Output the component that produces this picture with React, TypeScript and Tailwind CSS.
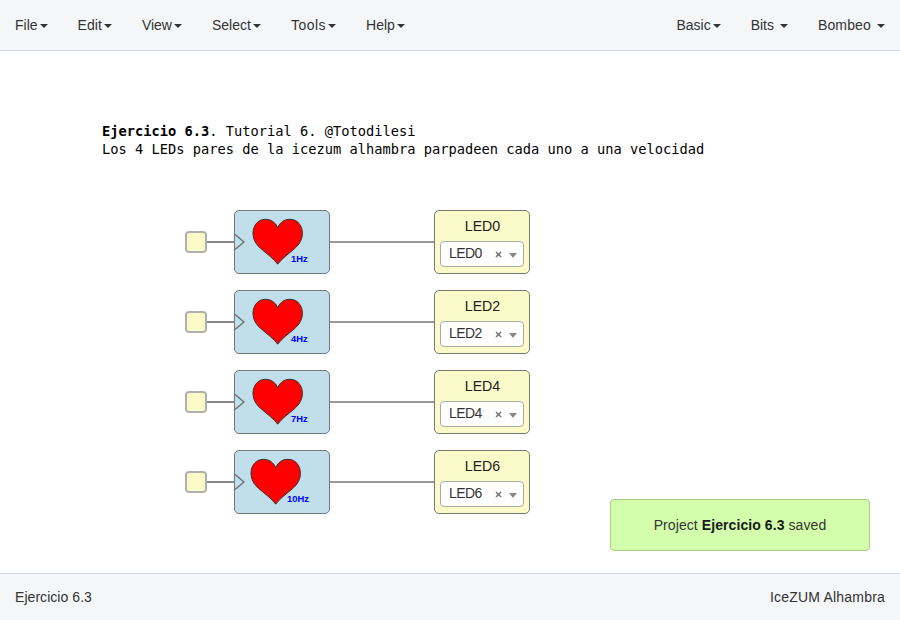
const leftMenu = [
  { label: "File", tracking: "" },
  { label: "Edit", tracking: "tracking-[0.05px]" },
  { label: "View", tracking: "" },
  { label: "Select", tracking: "" },
  { label: "Tools", tracking: "tracking-[0.5px]" },
  { label: "Help", tracking: "" },
];
const rightMenu = [
  { label: "Basic", tracking: "" },
  { label: "Bits\u00a0", tracking: "" },
  { label: "Bombeo\u00a0", tracking: "tracking-[0.15px]" },
];

const rows = [
  { hz: "1Hz", led: "LED0", hzX: 57, shift: 0 },
  { hz: "4Hz", led: "LED2", hzX: 57, shift: 0 },
  { hz: "7Hz", led: "LED4", hzX: 57, shift: 0 },
  { hz: "10Hz", led: "LED6", hzX: 53, shift: -2 },
];

function Menu({ label, tracking }: { label: string; tracking: string }) {
  return (
    <button className="flex h-5 items-center gap-[2px] whitespace-pre leading-5">
      <span className={tracking}>{label}</span>
      <span className="mt-px h-0 w-0 border-x-4 border-t-4 border-x-transparent border-t-[#333]" />
    </button>
  );
}

function HeartBlock({ hz, hzX, shift }: { hz: string; hzX: number; shift: number }) {
  return (
    <div className="h-16 w-24 rounded-[5px] border border-[#777] bg-[#c0dfeb]">
      <svg className="-m-px block h-16 w-24" viewBox="0 0 96 64">
        <path d="M1 24.5 L10 32 L1 39.5" fill="none" stroke="#666" strokeWidth="1.2" />
        <path
          transform={`translate(${shift} 0)`}
          d="M43.7 17.8 C41.5 12.3 37 9.3 31.5 9.3 C24 9.3 19 15.5 19 23.2 C19 29.5 21.8 34 26.8 38.6 C34 44.8 39.5 48.5 43.7 54.2 C47.9 48.5 53.4 44.8 60.6 38.6 C65.6 34 68.4 29.5 68.4 23.2 C68.4 15.5 63.4 9.3 55.9 9.3 C50.4 9.3 45.9 12.3 43.7 17.8 Z"
          fill="#f00"
          stroke="#333"
          strokeWidth="1"
        />
        <text x={hzX} y="52" fill="#00f" className="text-[9.4px] font-bold">
          {hz}
        </text>
      </svg>
    </div>
  );
}

function LedBlock({ name }: { name: string }) {
  return (
    <div className="flex h-16 w-24 flex-col rounded-[5px] border border-[#777] bg-[#fbfac9] px-[5px] text-[#333]">
      <div className="pt-[5px] pl-px text-center text-[14.2px] leading-5 text-[#222]">{name}</div>
      <div className="mt-[5px] flex h-[26px] items-center rounded-[4px] border border-[#aaa] bg-white pl-2 text-sm">
        <span className="-mt-[2px] w-[46px] leading-6 tracking-[-0.6px]">{name}</span>
        <svg className="h-[7px] w-[7px]" viewBox="0 0 7 7">
          <path d="M1 1 L6 6 M6 1 L1 6" stroke="#777" strokeWidth="1.6" />
        </svg>
        <span className="mt-[2px] ml-[7px] h-0 w-0 border-x-4 border-t-[5px] border-x-transparent border-t-[#888]" />
      </div>
    </div>
  );
}

export default function App() {
  return (
    <div className="flex h-[620px] w-[900px] flex-col overflow-hidden bg-white font-['Liberation_Sans',Arial,sans-serif] text-sm text-[#333]">
      <nav className="flex h-[51px] shrink-0 justify-between border-b border-[#d0d9db] bg-[#f4f6f8] px-[15px] pt-[15px]">
        <div className="flex gap-[30px]">
          {leftMenu.map((m) => (
            <Menu key={m.label} {...m} />
          ))}
        </div>
        <div className="flex gap-[30px]">
          {rightMenu.map((m) => (
            <Menu key={m.label} {...m} />
          ))}
        </div>
      </nav>
      <main className="relative flex-1">
        <div className="pt-[71px] pl-[102px] font-['DejaVu_Sans_Mono',monospace] text-[13.71px] leading-[18px] text-black">
          <p>
            <b>Ejercicio 6.3</b>. Tutorial 6. @Totodilesi
          </p>
          <p>Los 4 LEDs pares de la icezum alhambra parpadeen cada uno a una velocidad</p>
        </div>
        <div className="mt-[52px] flex flex-col gap-4 pl-[185px]">
          {rows.map((r) => (
            <div key={r.led} className="flex items-center">
              <div className="h-[22px] w-[22px] rounded-[4px] border-2 border-[#b0b0ac] bg-[#fbfac9]" />
              <div className="h-[2px] w-[27px] bg-[#888]" />
              <HeartBlock hz={r.hz} hzX={r.hzX} shift={r.shift} />
              <div className="h-[2px] w-[104px] bg-[#999]" />
              <LedBlock name={r.led} />
            </div>
          ))}
        </div>
        <div className="absolute right-[30px] bottom-[22px] flex h-[52px] w-[260px] items-center justify-center rounded-[4px] border border-[#a5cf83] bg-[#d3ffac]">
          <p className="tracking-[0.08px]">
            Project <b className="text-[#1a1a1a]">Ejercicio 6.3</b> saved
          </p>
        </div>
      </main>
      <footer className="flex h-[47px] shrink-0 items-center justify-between border-t border-[#d0d9db] bg-[#f4f6f8] px-[15px]">
        <span className="tracking-[0.05px]">Ejercicio 6.3</span>
        <span className="tracking-[0.2px]">IceZUM Alhambra</span>
      </footer>
    </div>
  );
}
